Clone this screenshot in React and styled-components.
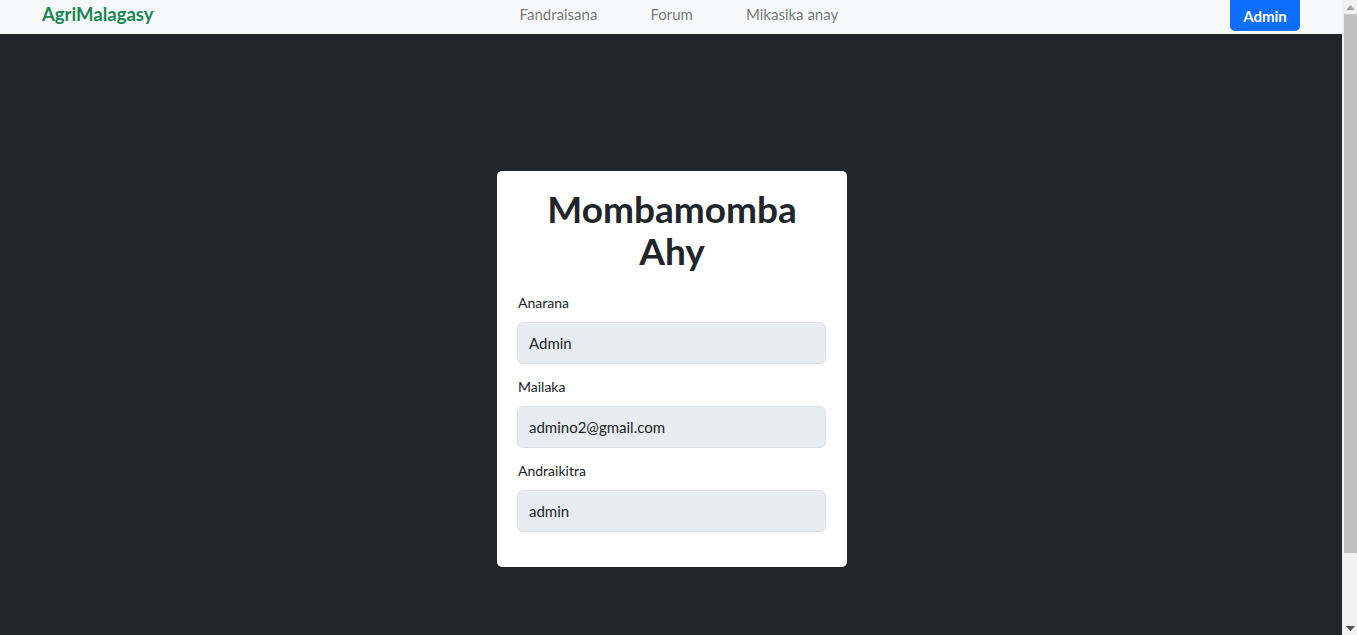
import React from "react";
import styled, { createGlobalStyle } from "styled-components";

const Global = createGlobalStyle`
  html, body { padding: 0; }
  html { margin: 0; }
  body {
    margin: 0 15px 0 0;
    background: #212529;
    font-family: Lato, "Open Sans", sans-serif;
    color: #212529;
  }
  * { box-sizing: border-box; }
`;

const Navbar = styled.nav`
  height: 34px;
  background: #f8f9fa;
  display: flex;
  align-items: center;
  padding: 0 42px 6px;
`;

const Brand = styled.a`
  color: #198754;
  font-weight: 700;
  font-size: 18.5px;
  text-decoration: none;
`;

const Links = styled.div`
  display: flex;
  gap: 53px;
  margin-left: 366px;
`;

const NavLink = styled.a`
  color: rgba(0, 0, 0, 0.55);
  font-size: 15px;
  text-decoration: none;
`;

const AdminButton = styled.button`
  margin-left: auto;
  align-self: flex-start;
  height: 31px;
  width: 70px;
  border: none;
  border-radius: 0 0 5px 5px;
  background: #0d6efd;
  color: #fff;
  font-family: inherit;
  font-weight: 700;
  font-size: 15px;
`;

const Main = styled.main`
  display: flex;
  justify-content: center;
  padding: 137px 0 146px 2px;
`;

const Card = styled.section`
  width: 350px;
  background: #fff;
  border-radius: 5px;
  padding: 17px 21px 23px;
`;

const Title = styled.h2`
  margin: 0 0 20px;
  text-align: center;
  font-size: 37px;
  line-height: 42px;
  font-weight: 700;
  color: #212529;
`;

const Field = styled.div`
  margin-bottom: 12px;
`;

const Label = styled.label`
  display: block;
  font-size: 14px;
  line-height: 22px;
  margin-bottom: 8px;
  color: #212529;
`;

const Input = styled.input`
  display: block;
  width: 309px;
  height: 42px;
  margin-left: -1px;
  padding: 0 11px;
  background: #e9ecef;
  border: 1px solid #dee2e6;
  border-radius: 6px;
  font-family: inherit;
  font-size: 15px;
  color: #212529;
  outline: none;
`;

/* Browser scrollbar rail drawn over the right page edge */
const ScrollRail = styled.div`
  position: fixed;
  top: 0;
  right: 0;
  width: 15px;
  height: 100vh;
  background: #f1f1f1;
  display: flex;
  flex-direction: column;
`;

const RailButton = styled.div`
  height: 14px;
  flex: none;
  display: flex;
  align-items: center;
  justify-content: center;
  padding-left: 2px;
`;

const RailTrack = styled.div`
  flex: 1;
  padding-left: 2px;
`;

const RailThumb = styled.div`
  height: 539px;
  background: #c1c1c1;
`;

const fields = [
  { label: "Anarana", value: "Admin" },
  { label: "Mailaka", value: "admino2@gmail.com" },
  { label: "Andraikitra", value: "admin" },
];

export default function App() {
  return (
    <>
      <Global />
      <Navbar>
        <Brand href="#">AgriMalagasy</Brand>
        <Links>
          <NavLink href="#">Fandraisana</NavLink>
          <NavLink href="#">Forum</NavLink>
          <NavLink href="#">Mikasika anay</NavLink>
        </Links>
        <AdminButton>Admin</AdminButton>
      </Navbar>
      <Main>
        <Card>
          <Title>Mombamomba Ahy</Title>
          {fields.map((f) => (
            <Field key={f.label}>
              <Label>{f.label}</Label>
              <Input readOnly value={f.value} />
            </Field>
          ))}
        </Card>
      </Main>
      <ScrollRail>
        <RailButton>
          <svg width="9" height="5" viewBox="0 0 9 5">
            <path d="M0 5 L4.5 0 L9 5 Z" fill="#a3a3a3" />
          </svg>
        </RailButton>
        <RailTrack>
          <RailThumb />
        </RailTrack>
        <RailButton>
          <svg width="9" height="5" viewBox="0 0 9 5">
            <path d="M0 0 L4.5 5 L9 0 Z" fill="#505050" />
          </svg>
        </RailButton>
      </ScrollRail>
    </>
  );
}
